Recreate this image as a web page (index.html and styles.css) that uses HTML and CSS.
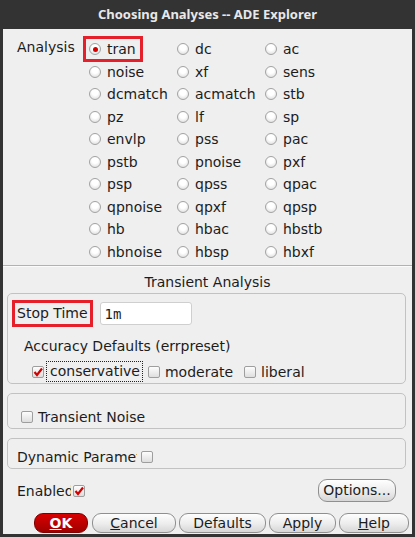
FILE: index.html
```html
<!DOCTYPE html>
<html lang="en">
  <head>
    <meta charset="UTF-8" />
    <title>Choosing Analyses -- ADE Explorer</title>
    <link rel="stylesheet" href="styles.css">
  </head>
  <body>
    <div class="window">
      <div class="titlebar">Choosing Analyses -- ADE Explorer</div>
      <div class="content">
        <div class="analysis">
          <div class="analysis-label">Analysis</div>
          <div class="analysis-grid">
            <div class="opt marked"><span class="radio on"></span>tran</div>
            <div class="opt"><span class="radio"></span>dc</div>
            <div class="opt"><span class="radio"></span>ac</div>
            <div class="opt"><span class="radio"></span>noise</div>
            <div class="opt"><span class="radio"></span>xf</div>
            <div class="opt"><span class="radio"></span>sens</div>
            <div class="opt"><span class="radio"></span>dcmatch</div>
            <div class="opt"><span class="radio"></span>acmatch</div>
            <div class="opt"><span class="radio"></span>stb</div>
            <div class="opt"><span class="radio"></span>pz</div>
            <div class="opt"><span class="radio"></span>lf</div>
            <div class="opt"><span class="radio"></span>sp</div>
            <div class="opt"><span class="radio"></span>envlp</div>
            <div class="opt"><span class="radio"></span>pss</div>
            <div class="opt"><span class="radio"></span>pac</div>
            <div class="opt"><span class="radio"></span>pstb</div>
            <div class="opt"><span class="radio"></span>pnoise</div>
            <div class="opt"><span class="radio"></span>pxf</div>
            <div class="opt"><span class="radio"></span>psp</div>
            <div class="opt"><span class="radio"></span>qpss</div>
            <div class="opt"><span class="radio"></span>qpac</div>
            <div class="opt"><span class="radio"></span>qpnoise</div>
            <div class="opt"><span class="radio"></span>qpxf</div>
            <div class="opt"><span class="radio"></span>qpsp</div>
            <div class="opt"><span class="radio"></span>hb</div>
            <div class="opt"><span class="radio"></span>hbac</div>
            <div class="opt"><span class="radio"></span>hbstb</div>
            <div class="opt"><span class="radio"></span>hbnoise</div>
            <div class="opt"><span class="radio"></span>hbsp</div>
            <div class="opt"><span class="radio"></span>hbxf</div>
          </div>
        </div>

        <div class="section-title">Transient Analysis</div>

        <div class="group stop-group">
          <div class="stop-row">
            <span class="stop-label">Stop Time</span>
            <input class="stop-input" type="text" value="1m" />
          </div>
          <div class="acc-title">Accuracy Defaults (errpreset)</div>
          <div class="acc-row">
            <span class="check-item focus">
              <span class="check"><svg width="10" height="10" viewBox="0 0 10 10"><path d="M1.5 5 L4 8 L9 1.5" /></svg></span>
              <span class="focus-text">conservative</span>
            </span>
            <span class="check-item moderate"><span class="check"></span>moderate</span>
            <span class="check-item"><span class="check"></span>liberal</span>
          </div>
        </div>

        <div class="group noise-group">
          <span class="check-item"><span class="check"></span>Transient Noise</span>
        </div>

        <div class="group dyn-group">
          <span class="dyn-label">Dynamic Parameters</span>
          <span class="check"></span>
        </div>

        <div class="enable-row">
          <span class="enable-label">Enabled</span>
          <span class="check"><svg width="10" height="10" viewBox="0 0 10 10"><path d="M1.5 5 L4 8 L9 1.5" /></svg></span>
          <button class="btn options">Options...</button>
        </div>

        <div class="button-row">
          <button class="btn ok"><u>O</u>K</button>
          <button class="btn cancel"><u>C</u>ancel</button>
          <button class="btn defaults">Defaults</button>
          <button class="btn apply">Apply</button>
          <button class="btn help"><u>H</u>elp</button>
        </div>
      </div>
    </div>
  </body>
</html>
```

FILE: styles.css
```css
body {
  margin: 0;
  background: #333333;
  font-family: "DejaVu Sans", sans-serif;
  font-size: 14px;
  color: #1c1c1c;
}
.window {
  width: 415px;
  height: 537px;
  display: flex;
  flex-direction: column;
}
.titlebar {
  height: 29px;
  line-height: 29px;
  text-align: center;
  color: #e8e8e8;
  font-family: "Noto Sans", sans-serif;
  font-weight: bold;
  font-size: 13px;
}
.content {
  flex: 1;
  margin: 0 3px 3px 3px;
  background: #efefef;
  display: flex;
  flex-direction: column;
}

/* analysis radio grid */
.analysis {
  display: flex;
  padding: 9px 0 2px 14px;
  border-bottom: 1px solid #b2b2b2;
  box-shadow: 0 1px 0 #fbfbfb;
}
.analysis-label {
  width: 69px;
  line-height: 18px;
}
.analysis-grid {
  display: grid;
  grid-template-columns: 88px 88px 88px;
  grid-auto-rows: 22.5px;
}
.opt {
  display: flex;
  align-items: center;
  gap: 6px;
  padding-left: 3px;
}
.opt.marked {
  justify-self: start;
  align-self: center;
  height: 20px;
  padding-right: 4px;
  outline: 3px solid #e5202a;
}
.radio {
  width: 10px;
  height: 10px;
  border: 1px solid #a3a3a3;
  border-radius: 50%;
  background: radial-gradient(circle at 50% 35%, #ffffff 35%, #d6d6d6 100%);
  position: relative;
  flex: none;
}
.radio.on::after {
  content: "";
  position: absolute;
  left: 2.5px;
  top: 2.5px;
  width: 5px;
  height: 5px;
  border-radius: 50%;
  background: #d40000;
}

.section-title {
  margin-top: 7px;
  line-height: 18px;
  text-align: center;
}

.group {
  margin: 9px 6px 0 4px;
  border: 1px solid #c2c2c2;
  border-radius: 5px;
  box-sizing: border-box;
}
.stop-group {
  margin-top: 2px;
  height: 91px;
}
.stop-row {
  display: flex;
  align-items: center;
  height: 23px;
  margin-top: 8px;
  padding-left: 7px;
}
.stop-label {
  padding: 0 2px;
  height: 21px;
  line-height: 21px;
  outline: 3px solid #e5202a;
}
.stop-input {
  margin-left: 10px;
  width: 92px;
  height: 23px;
  box-sizing: border-box;
  border: 1px solid #cfcfcf;
  border-radius: 3px;
  background: #ffffff;
  padding: 0 4px;
  font-family: "DejaVu Sans Mono", monospace;
  font-size: 14px;
  color: #1c1c1c;
}
.acc-title {
  margin-top: 12px;
  padding-left: 16px;
  line-height: 18px;
}
.acc-row {
  display: flex;
  align-items: center;
  gap: 5px;
  height: 21px;
  margin-top: 6px;
  padding-left: 24px;
}
.check-item {
  display: flex;
  align-items: center;
  gap: 5px;
  line-height: 18px;
}
.check-item.focus {
  gap: 2px;
}
.check-item.moderate {
  margin-right: 6px;
}
.focus-text {
  border: 1px dotted #222;
  padding: 0 2px 0 3px;
  line-height: 19px;
}
.check {
  width: 10px;
  height: 10px;
  border: 1px solid #9e9e9e;
  border-radius: 2px;
  background: linear-gradient(#fdfdfd, #dedede);
  display: flex;
  align-items: center;
  justify-content: center;
  flex: none;
}
.check svg path {
  fill: none;
  stroke: #d40000;
  stroke-width: 2.2;
}

.noise-group {
  height: 36px;
  padding: 14px 0 0 13px;
}
.dyn-group {
  height: 31px;
  padding: 9px 0 0 9px;
  display: flex;
  align-items: flex-start;
}
.dyn-label {
  width: 120px;
  line-height: 18px;
  white-space: nowrap;
  overflow: hidden;
}
.dyn-group .check {
  margin: 3px 0 0 4px;
}

.enable-row {
  display: flex;
  align-items: center;
  height: 23px;
  margin-top: 10px;
  padding-left: 14px;
}
.enable-label {
  width: 54px;
  white-space: nowrap;
  overflow: hidden;
}
.enable-row .check {
  margin-left: 2px;
}

.btn {
  font-family: "DejaVu Sans", sans-serif;
  font-size: 14px;
  color: #1c1c1c;
  border: 1px solid #8f8f8f;
  border-radius: 9px;
  background: linear-gradient(#fefefe, #ececec 55%, #d6d6d6);
  padding: 0;
  height: 20px;
  line-height: 18px;
}
.options {
  margin-left: auto;
  margin-right: 16px;
  width: 78px;
  height: 23px;
  line-height: 21px;
}
.button-row {
  display: flex;
  justify-content: flex-end;
  gap: 3px;
  margin-top: 11px;
  padding-right: 3px;
}
.ok {
  width: 54px;
  background: linear-gradient(#d80000, #b80000 60%, #a00000);
  border-color: #7c0000;
  color: #ffffff;
  font-weight: bold;
  margin-right: 1px;
}
.cancel { width: 84px; }
.defaults { width: 87px; }
.apply { width: 67px; }
.help { width: 70px; }
```
